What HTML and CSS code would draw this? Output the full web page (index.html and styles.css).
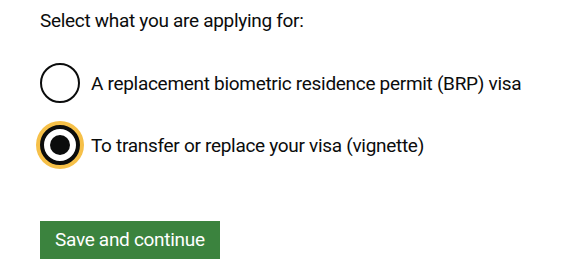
FILE: index.html
```html
<!DOCTYPE html>
<html lang="en">
<head>
    <meta charset="UTF-8">
    <meta name="viewport" content="width=device-width, initial-scale=1.0">
    <title>Select what you are applying for</title>
    <link rel="stylesheet" href="styles.css">
</head>
<body>
    <form class="page">
        <fieldset class="fieldset">
            <legend class="legend">Select what you are applying for:</legend>
            <div class="radios">
                <label class="radio">
                    <input class="radio-input" type="radio" name="applying" value="brp">
                    <span class="radio-mark"></span>
                    <span class="radio-label">A replacement biometric residence permit (BRP) visa</span>
                </label>
                <label class="radio">
                    <input class="radio-input" type="radio" name="applying" value="vignette" checked>
                    <span class="radio-mark focused"></span>
                    <span class="radio-label">To transfer or replace your visa (vignette)</span>
                </label>
            </div>
        </fieldset>
        <button class="button" type="button">Save and continue</button>
    </form>
</body>
</html>
```

FILE: styles.css
```css
body {
    margin: 0;
    background: #fff;
    color: #0b0c0c;
    font-family: Roboto, "Liberation Sans", sans-serif;
    font-size: 19px;
    line-height: 25px;
    letter-spacing: -0.3px;
}

.page {
    padding: 8px 40px 0;
}

.fieldset {
    margin: 0;
    padding: 0;
    border: 0;
}

.legend {
    padding: 0;
    margin-bottom: 30px;
}

.radios {
    display: flex;
    flex-direction: column;
    gap: 22px;
}

.radio {
    display: flex;
    align-items: center;
    gap: 11px;
    min-height: 40px;
    cursor: pointer;
}

.radio-input {
    display: none;
}

.radio-mark {
    position: relative;
    flex: none;
    width: 40px;
    height: 40px;
    box-sizing: border-box;
    border: 2px solid #0b0c0c;
    border-radius: 50%;
    background: #fff;
}

.radio-input:checked + .radio-mark::after {
    content: '';
    position: absolute;
    top: 50%;
    left: 50%;
    width: 20px;
    height: 20px;
    margin: -10px 0 0 -10px;
    border-radius: 50%;
    background: #0b0c0c;
}

.radio-mark.focused {
    border-width: 4px;
    box-shadow: 0 0 0 4px #f6c048;
}

.button {
    margin-top: 56px;
    padding: 7px 13px 8px;
    border: 2px solid transparent;
    border-radius: 0;
    background: #3b833e;
    box-shadow: 0 2px 0 #1d3a1f;
    color: #fff;
    font-family: inherit;
    font-size: 19px;
    line-height: 19px;
    letter-spacing: -0.3px;
    cursor: pointer;
}
```
